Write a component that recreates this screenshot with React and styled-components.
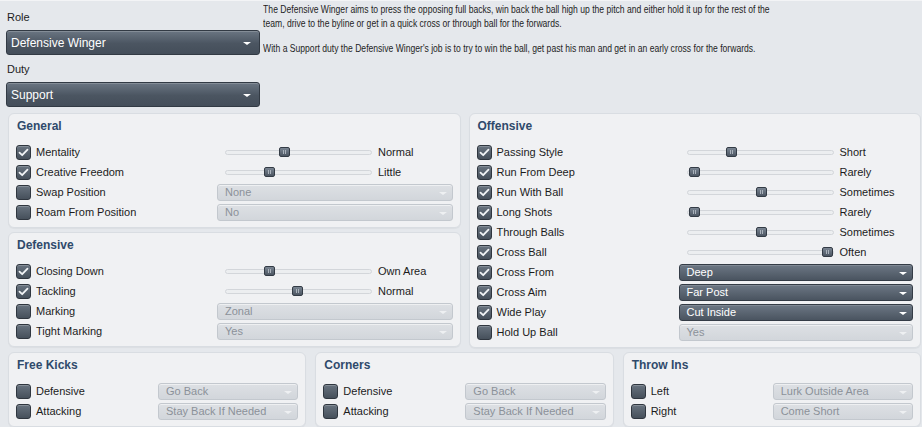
import React from 'react';
import styled, { createGlobalStyle } from 'styled-components';

const GlobalStyle = createGlobalStyle`
    html, body {
        margin: 0;
        padding: 0;
        background: #e5e8ec;
    }
    body {
        font-family: "Liberation Sans", Arial, sans-serif;
        font-size: 11px;
        color: #1c1c1c;
        overflow: hidden;
    }
`;

const Page = styled.div`
    width: 922px;
    height: 427px;
    box-sizing: border-box;
    border-top: 1px solid #f3f4f6;
    padding: 0 1px 0 8px;
    display: flex;
    flex-direction: column;
    gap: 4px;
    overflow: hidden;

    & > * {
        flex-shrink: 0;
    }
`;

const Top = styled.div`
    display: flex;
    height: 107px;
    margin: 0 0 1px -2px;
    overflow: hidden;
`;

const RoleColumn = styled.div`
    width: 254px;
    flex-shrink: 0;
    display: flex;
    flex-direction: column;
`;

const FieldLabel = styled.div`
    font-size: 11px;
    height: 14px;
    line-height: 14px;
    padding-left: 1px;
    margin: ${p => p.$first ? '9px' : '7px'} 0 6px;
`;

const BigSelect = styled.div`
    height: 25px;
    box-sizing: border-box;
    border: 1px solid #323a44;
    border-radius: 3px;
    background: linear-gradient(#6a7582, #4b5561 55%, #444e5a);
    box-shadow: inset 0 1px 0 rgba(255, 255, 255, 0.18);
    color: #fff;
    font-size: 12px;
    display: flex;
    align-items: center;
    justify-content: space-between;
    padding: 0 8px 0 4px;
`;

const Arrow = styled.span`
    width: 0;
    height: 0;
    border-left: ${p => p.$size}px solid transparent;
    border-right: ${p => p.$size}px solid transparent;
    border-top: ${p => Math.round(p.$size * 0.8)}px solid ${p => p.$color};
    margin-top: 2px;
`;

/* the game uses a narrow face here; squeeze the regular one to match */
const Description = styled.div`
    width: 668px;
    flex-shrink: 0;
    padding: 1px 0 0 4px;
    font-size: 11px;
    line-height: 14px;
    color: #1e1e1e;
    transform: scaleX(0.78);
    transform-origin: left top;

    p {
        margin: 0 0 11px;
    }
`;

const Columns = styled.div`
    display: grid;
    grid-template-columns: 1fr 1fr;
    gap: 8px;
`;

const Stack = styled.div`
    display: flex;
    flex-direction: column;
    gap: 4px;
`;

const BottomRow = styled.div`
    display: grid;
    grid-template-columns: repeat(3, 1fr);
    gap: 9px;
`;

const Panel = styled.section`
    background: #f0f1f3;
    border: 1px solid #d9dde2;
    border-radius: 6px;
    padding: 5px 7px 5px 7px;
    box-shadow: 0 1px 1px rgba(0, 0, 0, 0.04);
`;

const PanelTitle = styled.h3`
    margin: 0 0 9px 1px;
    height: 14px;
    line-height: 14px;
    font-size: 12px;
    font-weight: bold;
    color: #2f4a6b;
`;

const Row = styled.div`
    display: grid;
    grid-template-columns: ${p => p.$labelWidth}px 1fr;
    align-items: center;
    height: 20px;
`;

const LabelCell = styled.div`
    display: flex;
    align-items: center;
    gap: 5px;
`;

const CheckBox = styled.span`
    width: 15px;
    height: 15px;
    box-sizing: border-box;
    border: 1px solid #2f363f;
    border-radius: 3px;
    background: linear-gradient(#68737f, #46505b);
    box-shadow: inset 0 1px 0 rgba(255, 255, 255, 0.2);
    display: inline-flex;
    align-items: center;
    justify-content: center;
    flex-shrink: 0;
`;

const SliderCell = styled.div`
    display: flex;
    align-items: center;
    padding-left: 8px;
`;

const Track = styled.div`
    position: relative;
    width: 147px;
    height: 5px;
    box-sizing: border-box;
    border: 1px solid #d3d6da;
    border-radius: 3px;
    background: #eceef0;
`;

const Thumb = styled.span`
    position: absolute;
    top: -4px;
    width: 11px;
    height: 10px;
    box-sizing: border-box;
    border: 1px solid #333b45;
    border-radius: 2px;
    background: linear-gradient(#7a8592, #4c5662);
    display: flex;
    align-items: center;
    justify-content: center;
    gap: 1px;

    &::before, &::after {
        content: '';
        width: 1px;
        height: 4px;
        background: #aab2bb;
    }
`;

const SliderValue = styled.span`
    margin-left: 6px;
`;

const Select = styled.div`
    height: 17px;
    box-sizing: border-box;
    border-radius: 3px;
    display: flex;
    align-items: center;
    justify-content: space-between;
    padding: 0 5px 0 7px;
    font-size: 11px;
    border: 1px solid ${p => p.$active ? '#343c46' : '#c3c8ce'};
    background: ${p => p.$active
        ? 'linear-gradient(#6c7784, #4a5460)'
        : 'linear-gradient(#dde0e4, #d2d6db)'};
    color: ${p => p.$active ? '#ffffff' : '#8b9199'};
    box-shadow: inset 0 1px 0 rgba(255, 255, 255, ${p => p.$active ? 0.15 : 0.5});
`;

const Check = () => (
    <svg width="11" height="9" viewBox="0 0 11 9">
        <path d="M1.5 4.6 L4.2 7.2 L9.5 1.6" fill="none" stroke="#f2f4f6" strokeWidth="1.8" strokeLinecap="round" strokeLinejoin="round" />
    </svg>
);

const Option = ({ label, checked, control, labelWidth }) => (
    <Row $labelWidth={labelWidth}>
        <LabelCell>
            <CheckBox>{checked && <Check />}</CheckBox>
            <span>{label}</span>
        </LabelCell>
        {control.type === 'slider' ? (
            <SliderCell>
                <Track>
                    <Thumb style={{ left: `${Math.round(1 + control.value * 133)}px` }} />
                </Track>
                <SliderValue>{control.text}</SliderValue>
            </SliderCell>
        ) : (
            <Select $active={control.active}>
                <span>{control.text}</span>
                <Arrow $size={4} $color={control.active ? '#ffffff' : '#eef0f2'} />
            </Select>
        )}
    </Row>
);

const slider = (value, text) => ({ type: 'slider', value, text });
const select = (text, active = false) => ({ type: 'select', text, active });

const general = [
    { label: 'Mentality', checked: true, control: slider(0.39, 'Normal') },
    { label: 'Creative Freedom', checked: true, control: slider(0.28, 'Little') },
    { label: 'Swap Position', checked: false, control: select('None') },
    { label: 'Roam From Position', checked: false, control: select('No') },
];

const defensive = [
    { label: 'Closing Down', checked: true, control: slider(0.28, 'Own Area') },
    { label: 'Tackling', checked: true, control: slider(0.49, 'Normal') },
    { label: 'Marking', checked: false, control: select('Zonal') },
    { label: 'Tight Marking', checked: false, control: select('Yes') },
];

const offensive = [
    { label: 'Passing Style', checked: true, control: slider(0.28, 'Short') },
    { label: 'Run From Deep', checked: true, control: slider(0, 'Rarely') },
    { label: 'Run With Ball', checked: true, control: slider(0.5, 'Sometimes') },
    { label: 'Long Shots', checked: true, control: slider(0, 'Rarely') },
    { label: 'Through Balls', checked: true, control: slider(0.5, 'Sometimes') },
    { label: 'Cross Ball', checked: true, control: slider(1, 'Often') },
    { label: 'Cross From', checked: true, control: select('Deep', true) },
    { label: 'Cross Aim', checked: true, control: select('Far Post', true) },
    { label: 'Wide Play', checked: true, control: select('Cut Inside', true) },
    { label: 'Hold Up Ball', checked: false, control: select('Yes') },
];

const setPieces = [
    {
        title: 'Free Kicks',
        rows: [
            { label: 'Defensive', checked: false, control: select('Go Back') },
            { label: 'Attacking', checked: false, control: select('Stay Back If Needed') },
        ],
    },
    {
        title: 'Corners',
        rows: [
            { label: 'Defensive', checked: false, control: select('Go Back') },
            { label: 'Attacking', checked: false, control: select('Stay Back If Needed') },
        ],
    },
    {
        title: 'Throw Ins',
        rows: [
            { label: 'Left', checked: false, control: select('Lurk Outside Area') },
            { label: 'Right', checked: false, control: select('Come Short') },
        ],
    },
];

const InstructionPanel = ({ title, rows, labelWidth }) => (
    <Panel>
        <PanelTitle>{title}</PanelTitle>
        {rows.map((row, index) => (
            <Option key={index} {...row} labelWidth={labelWidth} />
        ))}
    </Panel>
);

const App = () => {
    return (
        <>
            <GlobalStyle />
            <Page>
                <Top>
                    <RoleColumn>
                        <FieldLabel $first>Role</FieldLabel>
                        <BigSelect>
                            <span>Defensive Winger</span>
                            <Arrow $size={4} $color="#ffffff" />
                        </BigSelect>
                        <FieldLabel>Duty</FieldLabel>
                        <BigSelect>
                            <span>Support</span>
                            <Arrow $size={4} $color="#ffffff" />
                        </BigSelect>
                    </RoleColumn>
                    <Description>
                        <p>The Defensive Winger aims to press the opposing full backs, win back the ball high up the pitch and either hold it up for the rest of the team, drive to the byline or get in a quick cross or through ball for the forwards.</p>
                        <p>With a Support duty the Defensive Winger's job is to try to win the ball, get past his man and get in an early cross for the forwards.</p>
                    </Description>
                </Top>
                <Columns>
                    <Stack>
                        <InstructionPanel title="General" rows={general} labelWidth={201} />
                        <InstructionPanel title="Defensive" rows={defensive} labelWidth={201} />
                    </Stack>
                    <InstructionPanel title="Offensive" rows={offensive} labelWidth={202} />
                </Columns>
                <BottomRow>
                    {setPieces.map(panel => (
                        <InstructionPanel key={panel.title} title={panel.title} rows={panel.rows} labelWidth={142} />
                    ))}
                </BottomRow>
            </Page>
        </>
    );
};

export default App;
